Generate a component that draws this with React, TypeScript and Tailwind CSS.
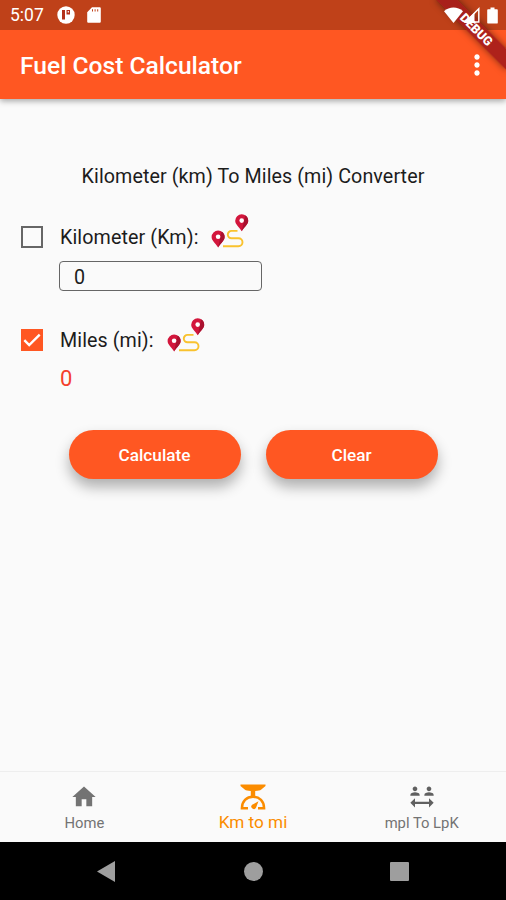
import { useState } from "react";
import { MdHome, MdMoreVert, MdSocialDistance } from "react-icons/md";

function RouteIcon() {
  return (
    <svg className="-ml-[0.5px] mt-[0.5px]" width="38" height="34" viewBox="0 0 38 34" fill="none">
      <path
        d="M12 32.300H27.500a4 4 0 0 0 4-4 4 4 0 0 0-4-4H20.500a3.700 3.700 0 0 1-3.700-3.700A3.700 3.700 0 0 1 20.500 16.900H26.500"
        stroke="#f9c22e"
        strokeWidth="1.900"
      />
      <path d="M7.100 33.500C4 28.500.600 26.500.600 23a6.500 6.500 0 0 1 13 0C13.600 26.500 10.200 28.500 7.100 33.500Z" fill="#d3163c" />
      <path d="M7.100 33.500C10.200 28.500 13.600 26.500 13.600 23a6.500 6.500 0 0 0-3-5.500Z" fill="#a9112f" />
      <circle cx="7.100" cy="22.800" r="2.300" fill="#fff" />
      <path d="M30.700 17.300C27.600 12.300 24.200 10.300 24.200 6.800a6.500 6.500 0 0 1 13 0C37.200 10.300 33.800 12.300 30.700 17.300Z" fill="#d3163c" />
      <path d="M30.700 17.300C33.800 12.300 37.200 10.300 37.200 6.800a6.500 6.500 0 0 0-3-5.500Z" fill="#a9112f" />
      <circle cx="30.700" cy="6.600" r="2.300" fill="#fff" />
    </svg>
  );
}

function ScaleIcon() {
  return (
    <svg className="ml-px" width="26" height="26" viewBox="0 0 26 26" fill="#fb8c00">
      <path d="M.5.500h25v1.500L21 5.700c-1 .7-2.500 1-5.800 1.200V12h-4.400V6.900C7.500 6.700 6 6.400 5 5.700L.500 2Z" />
      <path
        d="M8 24.200H1.900C1.900 17.200 6.500 12.800 13 12.800S24.100 17.200 24.100 24.200H18"
        fill="none"
        stroke="#fb8c00"
        strokeWidth="2.500"
      />
      <path d="M18.500 17.300l-2.400 6.300a2.500 2.500 0 1 1-4-2.900Z" />
    </svg>
  );
}

function StatusBar() {
  return (
    <div className="relative h-[30px] bg-[#bf4119] flex items-center text-white pl-[10px] pr-2">
      <span className="text-[17.500px] leading-none w-[47px] pt-[2px]">5:07</span>
      <svg width="18" height="18" viewBox="0 0 18 18">
        <circle cx="9" cy="9" r="8.700" fill="#fff" />
        <path d="M5 4h3v9.500H5ZM9.500 4H13v4.500H9.500Z" fill="#b3301a" />
        <path d="M10.700 5h1.200v1.500h-1.200Z" fill="#fff" />
      </svg>
      <svg className="ml-[12px]" width="14" height="16" viewBox="0 0 14 16">
        <path d="M5 .300h7.500c.8 0 1.300.5 1.300 1.300v12.800c0 .8-.5 1.300-1.300 1.300h-11c-.8 0-1.300-.5-1.300-1.300V5.200Z" fill="#fff" />
        <path d="M5 2.200h1v2.200H5ZM7.600 2.200h1v2.200h-1ZM10.200 2.200h1v2.200h-1Z" fill="#bf4119" />
      </svg>
      <div className="absolute z-10 right-2 top-0 h-[30px] flex items-center">
        <svg width="19" height="16" viewBox="0 0 19 16" fill="#fff">
          <path d="M9.500 16L0 4.200C5.200-.7 13.800-.7 19 4.200Z" />
        </svg>
        <svg className="ml-px" width="16" height="16" viewBox="0 0 16 16">
          <path d="M14.800 1.800v13.200H1.600Z" fill="none" stroke="#fff" strokeWidth="1.400" />
          <path d="M0 16L10.500 5.500V16Z" fill="#fff" />
        </svg>
        <svg className="ml-[7px]" width="11" height="17" viewBox="0 0 11 17" fill="#fff">
          <path d="M3.500.500h4v1.800h2.200c.8 0 1.100.4 1.100 1.100v12c0 .8-.4 1.200-1.100 1.200H1.300c-.8 0-1.100-.5-1.100-1.200v-12c0-.7.4-1.100 1.100-1.100h2.200Z" />
        </svg>
      </div>
    </div>
  );
}

export default function App() {
  const [km, setKm] = useState("0");
  const [miles, setMiles] = useState("0");
  const [toMiles, setToMiles] = useState(true);

  return (
    <div className="relative w-[506px] h-[900px] overflow-hidden flex flex-col bg-[#fafafa] font-[Roboto,sans-serif] text-[#1c1c1c]">
      <StatusBar />
      <header className="h-[69px] bg-[#ff5722] flex items-center justify-between pl-5 pr-[13px] text-white shadow-[0_2px_6px_rgba(0,0,0,0.35)]">
        <h1 className="pt-[3px] text-[24.600px] font-medium whitespace-nowrap">Fuel Cost Calculator</h1>
        <MdMoreVert size={32} />
      </header>

      <main className="flex-1 flex flex-col">
        <h2 className="mt-[64px] h-7 leading-7 text-center text-[19.700px] tracking-[0.08px] whitespace-nowrap">
          Kilometer (km) To Miles (mi) Converter
        </h2>

        <div className="mt-[22px] h-[36px] flex pl-[21px]">
          <button
            className="mt-[13px] w-[22px] h-[22px] border-2 border-[#666]"
            onClick={() => setToMiles(false)}
          />
          <span className="ml-[17px] mt-[11px] h-7 leading-7 text-[19.700px] tracking-[0.1px] whitespace-nowrap w-[151px]">
            Kilometer (Km):
          </span>
          <RouteIcon />
        </div>
        <input
          className="ml-[59px] mt-[12px] w-[203px] h-[30px] rounded-[4px] border border-[#666] pl-[14px] pt-[2px] text-[19.700px] outline-none"
          value={km}
          onChange={(e) => setKm(e.target.value)}
        />

        <div className="mt-[26px] h-[36px] flex pl-[21px]">
          <button
            className="mt-[12px] w-[22px] h-[22px] bg-[#ff5722] flex items-center justify-center"
            onClick={() => setToMiles(true)}
          >
            {toMiles && (
              <svg width="18" height="14" viewBox="0 0 18 14" fill="none">
                <path d="M1.300 7.200l4.900 4.900L16.700 1.600" stroke="#fff" strokeWidth="2.400" />
              </svg>
            )}
          </button>
          <span className="ml-[17px] mt-[10px] h-7 leading-7 text-[19.700px] tracking-[0.08px] whitespace-nowrap w-[107px]">
            Miles (mi):
          </span>
          <RouteIcon />
        </div>
        <p className="ml-[60px] mt-[12px] h-7 leading-7 text-[22px] text-[#f4402c]">{miles}</p>

        <div className="mt-[37px] flex justify-center gap-[25px] text-white text-[17.200px] font-medium">
          <button
            className="w-[172px] h-[49px] pt-[2px] rounded-full bg-[#ff5722] shadow-[0_8px_14px_rgba(0,0,0,0.3)]"
            onClick={() => setMiles(String(Number(km) * 0.621371))}
          >
            Calculate
          </button>
          <button
            className="w-[172px] h-[49px] pt-[2px] rounded-full bg-[#ff5722] shadow-[0_8px_14px_rgba(0,0,0,0.3)]"
            onClick={() => {
              setKm("0");
              setMiles("0");
            }}
          >
            Clear
          </button>
        </div>
      </main>

      <nav className="h-[71px] border-t border-[#eee] grid grid-cols-3 text-center text-[#737373]">
        <div className="flex flex-col items-center pt-[11px]">
          <MdHome size={28} />
          <span className="mt-[2px] text-[14.800px] leading-5">Home</span>
        </div>
        <div className="flex flex-col items-center pt-[12px] text-[#fb8c00]">
          <ScaleIcon />
          <span className="text-[17.200px] leading-6">Km to mi</span>
        </div>
        <div className="flex flex-col items-center pt-[11px]">
          <MdSocialDistance size={28} color="#606060" />
          <span className="mt-[2px] text-[14.800px] leading-5">mpl To LpK</span>
        </div>
      </nav>

      <footer className="h-[58px] bg-black grid grid-cols-3 items-center justify-items-center px-[34px]">
        <svg className="-ml-[2px]" width="18" height="21" viewBox="0 0 18 21" fill="#9e9e9e">
          <path d="M0 10.500L18 0V21Z" />
        </svg>
        <div className="w-[19px] h-[19px] rounded-full bg-[#9e9e9e]" />
        <div className="w-[19px] h-[19px] rounded-[1px] bg-[#9e9e9e]" />
      </footer>

      <div className="absolute top-[22px] left-[427px] w-[99px] h-[15px] rotate-45 bg-[#a51d1b]/90 shadow-[0_0_7px_rgba(0,0,0,0.5)] text-white text-[12.500px] leading-[15px] font-black text-center">
        DEBUG
      </div>
    </div>
  );
}
